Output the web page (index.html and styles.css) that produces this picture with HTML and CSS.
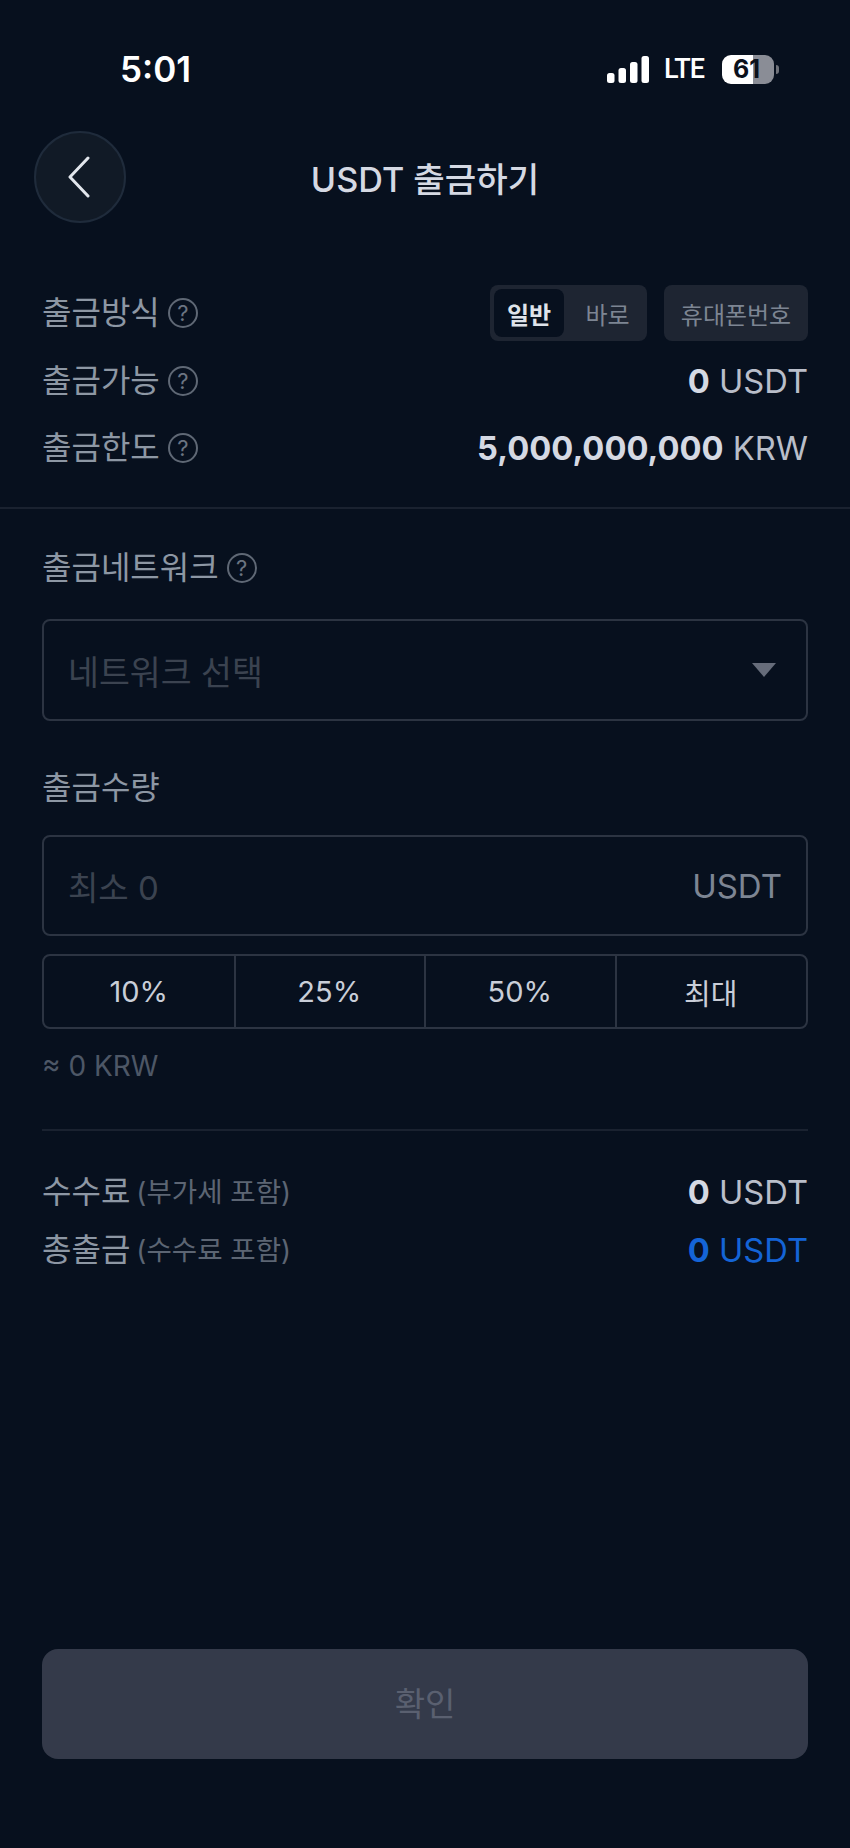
FILE: index.html
```html
<!DOCTYPE html>
<html lang="ko">
<head>
    <meta charset="UTF-8" />
    <meta name="viewport" content="width=device-width, initial-scale=1.0" />
    <title>USDT 출금하기</title>
    <link rel="stylesheet" href="styles.css">
</head>
<body>
    <div class="page">
        <!-- Status bar -->
        <div class="status-bar">
            <span class="clock">5:01</span>
            <div class="status-icons">
                <svg class="signal" width="42" height="27" viewBox="0 0 42 27">
                    <rect x="0" y="17" width="7.5" height="10" rx="2.5" />
                    <rect x="11.5" y="12" width="7.5" height="15" rx="2.5" />
                    <rect x="23" y="6" width="7.5" height="21" rx="2.5" />
                    <rect x="34.5" y="0" width="7.5" height="27" rx="2.5" />
                </svg>
                <span class="network-type">LTE</span>
                <div class="battery">61</div>
            </div>
        </div>

        <!-- Header -->
        <div class="nav">
            <button class="back-btn" type="button">
                <svg width="24" height="42" viewBox="0 0 24 42">
                    <path d="M21 2 L3 21 L21 40" />
                </svg>
            </button>
            <h1>USDT 출금하기</h1>
        </div>

        <!-- Withdraw info -->
        <div class="info">
            <div class="row">
                <div class="label">출금방식 <span class="help">?</span></div>
                <div class="method">
                    <div class="segment">
                        <span class="segment-item active">일반</span>
                        <span class="segment-item">바로</span>
                    </div>
                    <span class="phone-btn">휴대폰번호</span>
                </div>
            </div>
            <div class="row">
                <div class="label">출금가능 <span class="help">?</span></div>
                <div class="value"><b>0</b> USDT</div>
            </div>
            <div class="row">
                <div class="label">출금한도 <span class="help">?</span></div>
                <div class="value"><b>5,000,000,000</b> KRW</div>
            </div>
        </div>

        <!-- Withdraw form -->
        <div class="form">
            <div class="label field-network">출금네트워크 <span class="help">?</span></div>
            <div class="field select-field">
                <span class="placeholder">네트워크 선택</span>
                <span class="arrow"></span>
            </div>

            <div class="label field-amount">출금수량</div>
            <div class="field amount-field">
                <span class="placeholder">최소 0</span>
                <span class="unit">USDT</span>
            </div>

            <div class="percents">
                <span>10%</span>
                <span>25%</span>
                <span>50%</span>
                <span>최대</span>
            </div>
            <div class="approx">≈ 0 KRW</div>

            <div class="fees">
                <div class="fee-row">
                    <div class="label">수수료 <small>(부가세 포함)</small></div>
                    <div class="value"><b>0</b> USDT</div>
                </div>
                <div class="fee-row">
                    <div class="label">총출금 <small>(수수료 포함)</small></div>
                    <div class="value total"><b>0</b> USDT</div>
                </div>
            </div>
        </div>

        <button class="submit-btn" type="button" disabled>확인</button>
    </div>
</body>
</html>
```

FILE: styles.css
```css
* {
    box-sizing: border-box;
}
body {
    margin: 0;
    background-color: #07101e;
    font-family: Inter, "Noto Sans CJK KR", sans-serif;
}
.page {
    width: 850px;
    height: 1848px;
    display: flex;
    flex-direction: column;
    overflow: hidden;
}

/* status bar */
.status-bar {
    height: 131px;
    padding: 50px 76px 0 120px;
    display: flex;
    justify-content: space-between;
    align-items: flex-start;
    color: #ffffff;
}
.clock {
    font-size: 35px;
    line-height: 38px;
    font-weight: 600;
}
.status-icons {
    display: flex;
    align-items: center;
    height: 38px;
}
.signal {
    fill: #ffffff;
}
.network-type {
    margin-left: 15px;
    font-family: Roboto, sans-serif;
    font-size: 27px;
    font-weight: 500;
    letter-spacing: -1px;
}
.battery {
    position: relative;
    margin-left: 18px;
    width: 52px;
    height: 29px;
    padding-right: 3px;
    border-radius: 9px;
    background: linear-gradient(to right, #ffffff 60%, #8a8d96 60%);
    color: #0b111c;
    font-size: 25px;
    font-weight: 700;
    line-height: 29px;
    text-align: center;
}
.battery::after {
    content: "";
    position: absolute;
    top: 10px;
    right: -5px;
    width: 3px;
    height: 9px;
    border-radius: 0 3px 3px 0;
    background: #6f727a;
}

/* header */
.nav {
    height: 92px;
    padding: 0 34px;
    display: grid;
    grid-template-columns: 1fr auto 1fr;
    align-items: center;
}
.back-btn {
    width: 92px;
    height: 92px;
    padding: 0 3px 0 0;
    display: flex;
    justify-content: center;
    align-items: center;
    border: 2px solid #1f2b3b;
    border-radius: 50%;
    background: #111a26;
}
.back-btn path {
    fill: none;
    stroke: #e2e6ec;
    stroke-width: 3;
    stroke-linecap: round;
    stroke-linejoin: round;
}
.nav h1 {
    margin: 0;
    grid-column: 2;
    font-size: 34.2px;
    font-weight: 500;
    color: #d5d9e3;
}

/* info rows */
.info {
    margin-top: 62px;
    padding: 0 42px 31px;
    display: flex;
    flex-direction: column;
    gap: 11.5px;
    border-bottom: 2px solid #1a2230;
}
.row {
    height: 56px;
    display: flex;
    justify-content: space-between;
    align-items: center;
}
.label {
    display: flex;
    align-items: center;
    gap: 8px;
    font-size: 32px;
    line-height: 40px;
    color: #8d97a4;
}
.help {
    width: 30px;
    height: 30px;
    display: flex;
    justify-content: center;
    align-items: center;
    border: 2px solid #5f6875;
    border-radius: 50%;
    font-size: 22px;
    line-height: 1;
    color: #6b7481;
}
.value {
    font-size: 32.7px;
    line-height: 40px;
    color: #b9bec9;
}
.value b {
    font-weight: 700;
    color: #d5d9e3;
}
.value.total, .value.total b {
    color: #1464d6;
}
.method {
    display: flex;
    gap: 17px;
    font-size: 24px;
    color: #7d8593;
}
.segment {
    width: 157px;
    height: 56px;
    padding: 4px;
    display: flex;
    border-radius: 8px;
    background: #1e2532;
}
.segment-item {
    flex: 1;
    padding-left: 8px;
    display: flex;
    justify-content: center;
    align-items: center;
    border-radius: 8px;
}
.segment-item.active {
    flex: 0 0 70px;
    padding-left: 0;
    background: #07101e;
    color: #dfe3ea;
    font-weight: 700;
}
.phone-btn {
    width: 144px;
    height: 56px;
    display: flex;
    justify-content: center;
    align-items: center;
    border-radius: 8px;
    background: #1e2532;
}

/* form */
.form {
    padding: 39px 42px 0;
    display: flex;
    flex-direction: column;
}
.field {
    padding: 0 24px;
    display: flex;
    justify-content: space-between;
    align-items: center;
    border: 2px solid #2c3442;
    border-radius: 8px;
    font-size: 33px;
}
.select-field {
    height: 102px;
    margin-top: 31px;
    padding-right: 30px;
    font-size: 33.6px;
}
.field-amount {
    margin-top: 47px;
}
.amount-field {
    height: 101px;
    margin-top: 27px;
}
.placeholder {
    color: #3b4350;
}
.unit {
    color: #7d8593;
}
.arrow {
    width: 0;
    height: 0;
    border-top: 14px solid #666c7a;
    border-left: 12px solid transparent;
    border-right: 12px solid transparent;
}
.percents {
    height: 75px;
    margin-top: 18px;
    display: grid;
    grid-template-columns: repeat(4, 1fr);
    border: 2px solid #2c3442;
    border-radius: 8px;
    font-size: 29px;
    color: #c9ced8;
}
.percents span {
    margin-right: -1px;
    display: flex;
    justify-content: center;
    align-items: center;
    border-right: 2px solid #2c3442;
}
.percents span:last-child {
    margin-right: 0;
    border-right: 0;
}
.approx {
    margin-top: 19px;
    font-size: 28px;
    line-height: 36px;
    color: #4d5766;
}
.fees {
    margin-top: 45px;
    padding-top: 41px;
    display: flex;
    flex-direction: column;
    gap: 18px;
    border-top: 2px solid #1a2230;
}
.fee-row {
    display: flex;
    justify-content: space-between;
    align-items: center;
}
.fee-row .label {
    gap: 6px;
}
.fee-row small {
    font-size: 27.6px;
    color: #5c6573;
}

/* confirm button */
.submit-btn {
    height: 110px;
    margin: auto 42px 89px;
    padding: 0 0 4px;
    border: 0;
    border-radius: 16px;
    background: #343a4a;
    color: #5a6070;
    font-family: inherit;
    font-size: 33px;
}
```
